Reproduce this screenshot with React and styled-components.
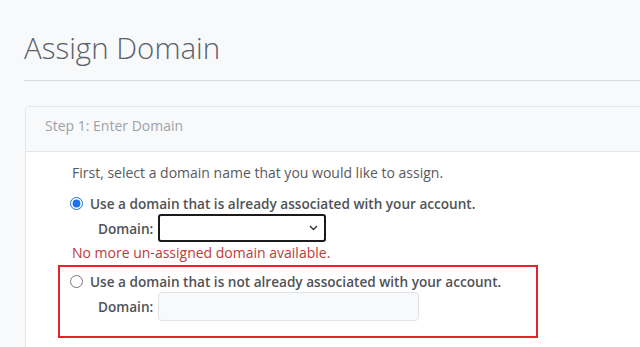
import styled, { createGlobalStyle } from "styled-components";

const GlobalStyle = createGlobalStyle`
  html, body {
    margin: 0;
    padding: 0;
    background: #f8f9fb;
    overflow: hidden;
  }
  body {
    font-family: "Open Sans", "Liberation Sans", sans-serif;
    font-size: 14px;
    line-height: 21px;
    color: #58595b;
  }
`;

const Page = styled.div`
  padding: 0 0 0 24px;
  width: 640px;
  box-sizing: border-box;
`;

const Title = styled.h1`
  margin: 31px 0 0;
  font-size: 29.5px;
  font-weight: 300;
  line-height: 34px;
  color: #5b6069;
`;

const Rule = styled.hr`
  margin: 15px -10px 25px 0;
  border: 0;
  border-top: 1px solid #d6d9de;
`;

const Panel = styled.section`
  margin: 0 -20px 0 1px;
  border: 1px solid #e3e6ea;
  border-radius: 4px;
  background: #fff;
  overflow: hidden;
`;

const PanelHeader = styled.div`
  padding: 8px 19px 15px;
  background: #f8f9fb;
  border-bottom: 1px solid #e3e6ea;
  color: #9da2a9;
`;

const PanelBody = styled.div`
  padding: 10px 0 40px 32px;
`;

const Intro = styled.p`
  margin: 0 0 10px;
  padding-left: 14px;
`;

const ErrorText = styled.p`
  margin: 0;
  padding-left: 14px;
  color: #c0393b;
`;

const Option = styled.div`
  padding-left: ${(p) => (p.$boxed ? "10px" : "12px")};
  width: ${(p) => (p.$boxed ? "466px" : "auto")};
  border: ${(p) => (p.$boxed ? "2px solid #e2242a" : "0")};
  margin-top: ${(p) => (p.$boxed ? "2px" : "0")};
  padding-top: ${(p) => (p.$boxed ? "4px" : "0")};
  padding-bottom: ${(p) => (p.$boxed ? "15px" : "0")};
`;

const RadioLabel = styled.label`
  display: flex;
  align-items: center;
  gap: 7px;
  font-size: 13.6px;
  font-weight: 600;
  color: #505257;
`;

const Radio = styled.input`
  margin: 0;
  width: 13px;
  height: 13px;
  accent-color: #1a73e8;
`;

const FieldRow = styled.div`
  display: flex;
  align-items: center;
  gap: 5px;
  padding-left: 28px;
`;

const FieldLabel = styled.span`
  font-size: 13.6px;
  font-weight: 600;
  color: #505257;
`;

const SelectWrap = styled.div`
  position: relative;
  width: 168px;
  height: 28px;
  box-sizing: border-box;
  border: 2px solid #1b1b1b;
  border-radius: 3px;
  background: #fff;
`;

const Chevron = styled.svg`
  position: absolute;
  right: 6px;
  top: 9px;
`;

const TextInput = styled.input`
  width: 261px;
  height: 29px;
  box-sizing: border-box;
  border: 1px solid #dfe2e6;
  border-radius: 4px;
  background: #f8f9fa;
  font: inherit;
  padding: 0 8px;
`;

export default function App() {
  return (
    <Page>
      <GlobalStyle />
      <Title>Assign Domain</Title>
      <Rule />
      <Panel>
        <PanelHeader>Step 1: Enter Domain</PanelHeader>
        <PanelBody>
          <Intro>First, select a domain name that you would like to assign.</Intro>
          <Option>
            <RadioLabel>
              <Radio type="radio" name="domainType" defaultChecked />
              Use a domain that is already associated with your account.
            </RadioLabel>
            <FieldRow>
              <FieldLabel>Domain:</FieldLabel>
              <SelectWrap>
                <Chevron width="9" height="6" viewBox="0 0 9 6">
                  <path d="M1 1l3.5 3.5L8 1" fill="none" stroke="#333" strokeWidth="1.4" />
                </Chevron>
              </SelectWrap>
            </FieldRow>
          </Option>
          <ErrorText>No more un-assigned domain available.</ErrorText>
          <Option $boxed>
            <RadioLabel>
              <Radio type="radio" name="domainType" />
              Use a domain that is not already associated with your account.
            </RadioLabel>
            <FieldRow>
              <FieldLabel>Domain:</FieldLabel>
              <TextInput type="text" />
            </FieldRow>
          </Option>
        </PanelBody>
      </Panel>
    </Page>
  );
}
